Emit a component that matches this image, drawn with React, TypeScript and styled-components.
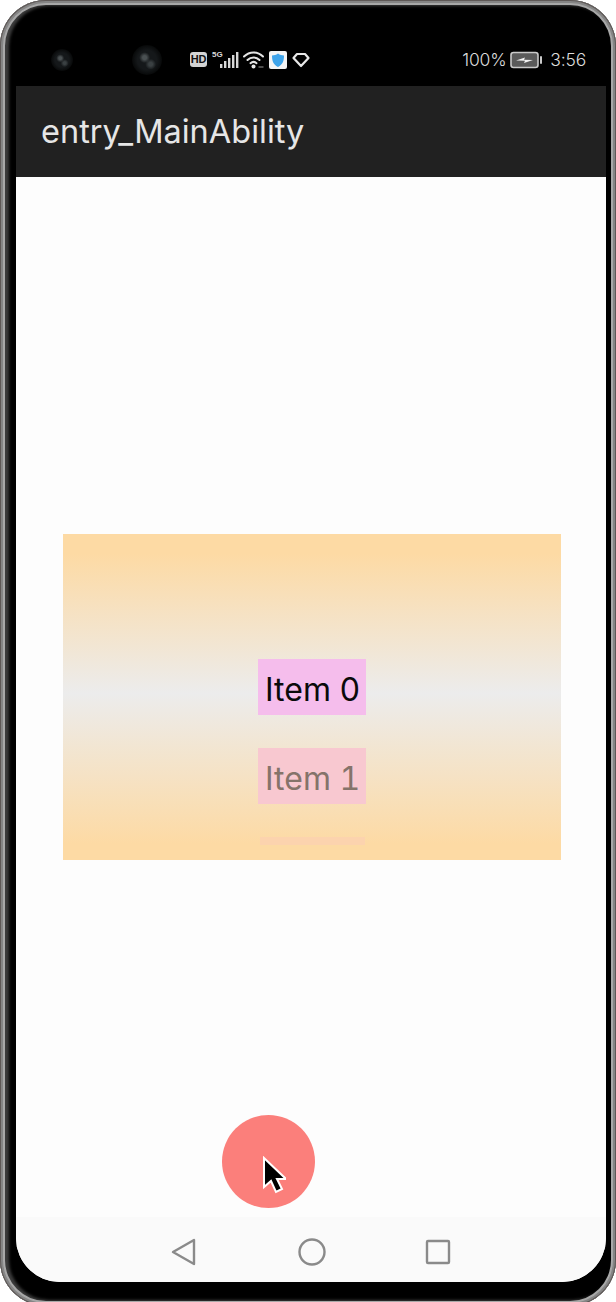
import React from "react";
import styled, { createGlobalStyle } from "styled-components";

const Global = createGlobalStyle`
  html, body { margin: 0; padding: 0; background: #fff; }
  #root { width: 616px; height: 1302px; overflow: hidden; }
`;

const Bezel = styled.div`
  box-sizing: border-box;
  width: 616px;
  height: 1306px;
  padding: 0 10px 24px 16px;
  display: flex;
  flex-direction: column;
  background: #000;
  border-radius: 46px;
  box-shadow:
    inset 0 0 0 1px #5e5856,
    inset 0 0 0 3px #858585,
    inset 0 0 0 5px #a8a8a8,
    inset 3px 0 3px 6px #3c3c3c;
  font-family: "Inter", "Liberation Sans", sans-serif;
`;

const StatusBar = styled.div`
  flex: 0 0 86px;
  display: flex;
  align-items: center;
  padding-top: 33px;
  box-sizing: border-box;
  color: #dcdcdc;
`;

const Camera = styled.div<{ $size: number }>`
  width: ${(p) => p.$size}px;
  height: ${(p) => p.$size}px;
  border-radius: 50%;
  flex: none;
  background:
    radial-gradient(circle at 42% 42%, #4a5052 0 8%, transparent 22%),
    radial-gradient(circle at 62% 64%, #3a4042 0 7%, transparent 20%),
    radial-gradient(circle at 50% 50%, #15181a 0 45%, #050606 75%, #000 100%);
`;

const Cameras = styled.div`
  display: flex;
  align-items: center;
  gap: 59px;
  margin-left: 35px;
  width: 139px;
`;

const Indicators = styled.div`
  display: flex;
  align-items: center;
  height: 20px;
`;

const HdBadge = styled.span`
  width: 17px;
  height: 15px;
  border-radius: 3px;
  background: #d4d4d4;
  color: #111;
  font: 700 11px/15px "Liberation Sans", sans-serif;
  text-align: center;
  letter-spacing: -0.3px;
`;

const FiveG = styled.span`
  font: 700 8px/8px "Liberation Sans", sans-serif;
  color: #d8d8d8;
  margin: -9px 0 0 5px;
  width: 10px;
`;

const RightStatus = styled.div`
  margin-left: auto;
  margin-right: 20px;
  display: flex;
  align-items: center;
  gap: 4px;
  font-size: 17.500px;
  line-height: 20px;
  font-weight: 300;
  letter-spacing: -0.2px;
`;

const Clock = styled.span`
  margin-left: 3px;
`;

const AppBar = styled.header`
  flex: 0 0 91px;
  box-sizing: border-box;
  display: flex;
  align-items: center;
  padding-left: 25px;
  background: #212121;
  color: #e6e6e6;
  font-size: 32.500px;
`;

const Screen = styled.main`
  position: relative;
  flex: 1;
  display: flex;
  flex-direction: column;
  overflow: hidden;
  border-radius: 0 0 44px 44px;
  background: #fdfdfd;
`;

const Content = styled.div`
  flex: 1;
  padding: 357px 45px 0 47px;
`;

const Panel = styled.section`
  height: 326px;
  display: flex;
  flex-direction: column;
  align-items: center;
  gap: 33px;
  padding-top: 125px;
  box-sizing: border-box;
  overflow: hidden;
  background: linear-gradient(180deg, #fddaa4 0%, #fddaa4 6%, #ececec 49%, #fddaa4 95%, #fddaa4 100%);
`;

const Item = styled.div<{ $bg: string; $fg: string }>`
  flex: none;
  width: 108px;
  height: 56px;
  display: flex;
  align-items: center;
  padding: 5px 0 0 7px;
  box-sizing: border-box;
  background: ${(p) => p.$bg};
  color: ${(p) => p.$fg};
  font-size: 32px;
  font-variant-numeric: tabular-nums;
`;

const FadedItem = styled.div`
  flex: none;
  width: 105px;
  height: 8px;
  background: #fcd3ae;
`;

const Fab = styled.button`
  position: absolute;
  left: 205.500px;
  top: 938px;
  width: 93px;
  height: 93px;
  padding: 0;
  border: 0;
  border-radius: 50%;
  background: #fb7f7b;
`;

const Pointer = styled.svg`
  position: absolute;
  left: 40px;
  top: 41px;
  width: 24px;
  height: 38px;
`;

const NavBar = styled.nav`
  flex: 0 0 65px;
  display: flex;
  align-items: center;
  padding: 5px 0 0 155px;
  box-sizing: border-box;
  background: #fafafa;
`;

const NavIcon = styled.svg<{ $gap: number; $width: number }>`
  width: ${(p) => p.$width}px;
  height: 28px;
  flex: none;
  margin-right: ${(p) => p.$gap}px;
  fill: none;
  stroke: #8a8a8a;
  stroke-width: 2.400;
  stroke-linejoin: round;
`;

export default function App() {
  return (
    <>
      <Global />
      <Bezel>
        <StatusBar>
          <Cameras>
            <Camera $size={22} />
            <Camera $size={30} />
          </Cameras>
          <Indicators>
            <HdBadge>HD</HdBadge>
            <FiveG>5G</FiveG>
            <svg width="20" height="18" viewBox="0 0 20 18" style={{ marginLeft: -3 }}>
              <g fill="#d8d8d8">
                <rect x="1" y="13" width="2.400" height="4" />
                <rect x="5" y="10" width="2.400" height="7" />
                <rect x="9" y="7" width="2.400" height="10" />
                <rect x="13" y="4" width="2.400" height="13" />
                <rect x="17" y="1" width="2.400" height="16" />
              </g>
            </svg>
            <svg width="22" height="20" viewBox="0 0 22 20" style={{ marginLeft: 4 }}>
              <g fill="none" stroke="#e4e4e4" strokeWidth="2" strokeLinecap="round">
                <path d="M1 6.500C6.500 1 14.500 1 20 6.500" />
                <path d="M4.500 10C8 6.500 13 6.500 16.500 10" />
                <path d="M7.500 13.200C9.500 11.400 11.500 11.400 13.500 13.200" />
              </g>
              <circle cx="10.500" cy="16.500" r="2" fill="#e8e8e8" />
              <path d="M15.500 17h5" stroke="#666" strokeWidth="1.500" />
            </svg>
            <svg width="18" height="18" viewBox="0 0 18 18" style={{ marginLeft: 4 }}>
              <rect width="18" height="18" rx="2" fill="#f4f4f4" />
              <path d="M9 2.500c2 1.400 3.800 1.900 6 2 0 5-1 9-6 11.500C4 13.500 3 9.500 3 4.500c2.200-.1 4-.6 6-2z" fill="#3fa4ea" />
            </svg>
            <svg width="18" height="16" viewBox="0 0 18 16" style={{ marginLeft: 5 }}>
              <path d="M5 2h8l3.500 4L9 14 1.500 6z" fill="none" stroke="#e8e8e8" strokeWidth="2.200" strokeLinejoin="round" />
            </svg>
          </Indicators>
          <RightStatus>
            <span>100%</span>
            <svg width="33" height="18" viewBox="0 0 33 18">
              <rect x="1" y="1.500" width="27" height="15" rx="2.500" fill="#5a5a5a" stroke="#c9c9c9" strokeWidth="1.600" />
              <rect x="30" y="5" width="2" height="8" rx="1" fill="#c9c9c9" />
              <path d="M6 9.500l9-3-1 2.300 9 .2-9 3 1-2.300z" fill="#f2f2f2" />
            </svg>
            <Clock>3:56</Clock>
          </RightStatus>
        </StatusBar>
        <AppBar>entry_MainAbility</AppBar>
        <Screen>
          <Content>
            <Panel>
              <Item $bg="#f5bdec" $fg="#0a0a0a">Item 0</Item>
              <Item $bg="#f8c8d0" $fg="#85736a">Item 1</Item>
              <FadedItem />
            </Panel>
          </Content>
          <Fab aria-label="action">
            <Pointer viewBox="0 0 24 38">
              <path d="M2 2v29l7-6 5 11 6-3-5-10h9z" fill="#000" stroke="#fff" strokeWidth="2" strokeLinejoin="miter" />
            </Pointer>
          </Fab>
          <NavBar>
            <NavIcon $width={26} $gap={101} viewBox="0 0 26 28">
              <path d="M23 2v24L2 14z" />
            </NavIcon>
            <NavIcon $width={28} $gap={99} viewBox="0 0 28 28">
              <circle cx="14" cy="14" r="12.500" />
            </NavIcon>
            <NavIcon $width={26} $gap={0} viewBox="0 0 26 28">
              <rect x="2" y="3" width="22" height="22" rx="1" />
            </NavIcon>
          </NavBar>
        </Screen>
      </Bezel>
    </>
  );
}
